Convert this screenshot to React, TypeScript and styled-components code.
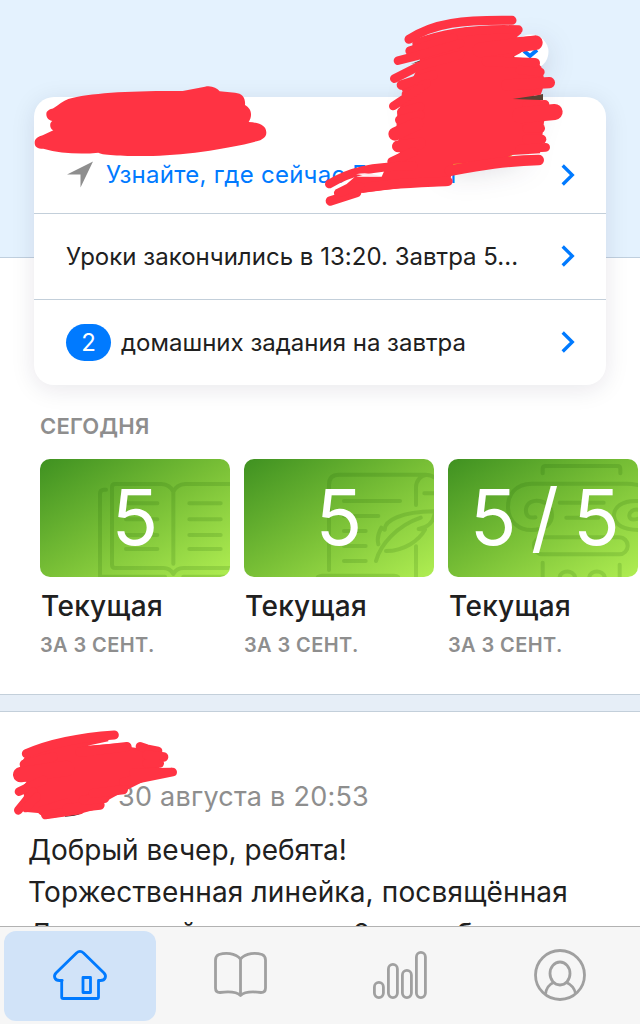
import React from "react";
import styled, { createGlobalStyle } from "styled-components";

const Global = createGlobalStyle`
  * { box-sizing: border-box; }
  body { margin: 0; background: #fff; font-family: Inter, "Liberation Sans", sans-serif; color: #202020; }
`;

const Screen = styled.main`
  position: relative;
  width: 640px;
  height: 1024px;
  display: flex;
  flex-direction: column;
  overflow: hidden;
  background: #fff;
`;

const Summary = styled.section`
  flex: none;
  height: 401px;
  padding: 97px 34px 0;
  background: linear-gradient(#e4f2fe 0 257px, #bfcfde 257px 258px, #fff 258px);
`;

const Card = styled.div`
  height: 288px;
  border-radius: 20px;
  background: #fff;
  box-shadow: 0 4px 24px rgba(30, 20, 60, 0.1);
  display: flex;
  flex-direction: column;
`;

const CardRow = styled.div<{ $h: number; $top?: number }>`
  height: ${(p) => p.$h}px;
  padding: ${(p) => p.$top ?? 0}px 31px 0 32px;
  display: flex;
  align-items: center;
  & + & { border-top: 1px solid #c3cfda; }
`;

const RowText = styled.span<{ $link?: boolean; $spacing: number }>`
  flex: 1;
  font-size: 24px;
  line-height: 30px;
  letter-spacing: ${(p) => p.$spacing}px;
  white-space: pre;
  color: ${(p) => (p.$link ? "#007aff" : "#202020")};
`;

const NameEnd = styled.span`
  margin-left: 75px;
`;

const Count = styled.span`
  width: 45px;
  height: 37px;
  margin-right: 10px;
  border-radius: 19px;
  background: #007aff;
  color: #fff;
  font-size: 24px;
  line-height: 37px;
  text-align: center;
`;

const LocationIcon = styled.svg`
  width: 27px;
  height: 27px;
  margin-right: 13px;
`;

const ChevronIcon = styled.svg<{ $lift: number }>`
  width: 14px;
  height: 22px;
  margin-bottom: ${(p) => p.$lift}px;
`;

const Today = styled.section`
  flex: none;
  height: 293px;
  padding: 10px 0 0 40px;
`;

const SectionTitle = styled.h2`
  margin: 0 0 18px;
  font-size: 22px;
  line-height: 30px;
  font-weight: 600;
  letter-spacing: 0.2px;
  color: #8e8e8e;
`;

const Marks = styled.div`
  display: flex;
  gap: 14px;
`;

const Mark = styled.article`
  flex: none;
  width: 190px;
`;

const MarkTile = styled.div`
  display: grid;
  height: 118px;
  border-radius: 10px;
  overflow: hidden;
  background: linear-gradient(to bottom right, #3f9121, #78bf36 50%, #b0ee52);
  & > * { grid-area: 1 / 1; }
`;

const MarkArt = styled.svg`
  width: 190px;
  height: 118px;
  fill: none;
  stroke: rgba(20, 90, 0, 0.15);
  stroke-width: 12;
  stroke-linecap: round;
  stroke-linejoin: round;
`;

const MarkValue = styled.div<{ $spacing: number }>`
  text-align: center;
  font-size: 77px;
  line-height: 117px;
  font-weight: 400;
  letter-spacing: ${(p) => p.$spacing}px;
  color: #fff;
  white-space: nowrap;
`;

const MarkName = styled.div`
  margin-top: 10px;
  padding-left: 1px;
  font-size: 28px;
  line-height: 38px;
  font-weight: 500;
  letter-spacing: 0.3px;
`;

const MarkDate = styled.div`
  margin-top: 6px;
  font-size: 20px;
  line-height: 28px;
  font-weight: 600;
  letter-spacing: 0.4px;
  color: #8e8e8e;
`;

const Divider = styled.div`
  flex: none;
  height: 18px;
  background: #e6eef7;
  border: solid #c3cfda;
  border-width: 1px 0;
`;

const Post = styled.article`
  flex: 1;
  min-height: 0;
  overflow: hidden;
  padding: 66px 0 0 28px;
`;

const PostDate = styled.div`
  padding-left: 90px;
  font-size: 27px;
  line-height: 38px;
  letter-spacing: 0.25px;
  color: #8e8e8e;
`;

const PostText = styled.p`
  margin: 13px 0 0;
  font-size: 28px;
  line-height: 42px;
  white-space: pre;
`;

const Line = styled.span<{ $spacing: number; $indent?: number }>`
  display: block;
  padding-left: ${(p) => p.$indent ?? 0}px;
  letter-spacing: ${(p) => p.$spacing}px;
`;

const TabBar = styled.nav`
  flex: none;
  height: 98px;
  padding: 4px 4px 3px;
  display: flex;
  gap: 8px;
  background: #f6f6f6;
  border-top: 1px solid #b2b2b2;
`;

const Tab = styled.button<{ $active?: boolean }>`
  width: 152px;
  height: 90px;
  padding: 0;
  border: 0;
  border-radius: 12px;
  background: ${(p) => (p.$active ? "#d1e3f8" : "transparent")};
  color: ${(p) => (p.$active ? "#007aff" : "#a0a0a0")};
`;

const TabIcon = styled.svg`
  display: block;
  width: 152px;
  height: 90px;
  fill: none;
  stroke: currentColor;
  stroke-width: 2.8;
  stroke-linejoin: round;
`;

const Scribble = styled.svg<{ $x: number; $y: number }>`
  position: absolute;
  left: ${(p) => p.$x}px;
  top: ${(p) => p.$y}px;
  overflow: visible;
`;

const Portrait = styled.svg`
  position: absolute;
  left: 380px;
  top: 0;
  overflow: visible;
  filter: drop-shadow(0 8px 14px rgba(30, 20, 60, 0.14));
`;

const RED = "#ff3343";

const Marker = ({ strokes, core }: { strokes: [number, string][]; core: string }) => (
  <>
    <path d={core} fill={RED} />
    <g fill="none" stroke={RED} strokeLinecap="round" strokeLinejoin="round">
      {strokes.map(([width, d]) => (
        <path key={d} d={d} strokeWidth={width} />
      ))}
    </g>
  </>
);

const Chevron = ({ lift = 0 }: { lift?: number }) => (
  <ChevronIcon viewBox="0 0 14 22" $lift={lift}>
    <path d="M1.700 1.500 11.300 11 1.700 20.500" fill="none" stroke="#007aff" strokeWidth="3.300" />
  </ChevronIcon>
);

const BookArt = () => (
  <MarkArt viewBox="0 0 570 354">
    <path d="M198 92H192Q180 92 180 104V353H375M430 353H575" />
    <path d="M400 98C395 85 380 75 365 75H226Q216 75 216 85V317Q216 327 226 327H370C385 327 394 334 400 345C406 334 415 327 430 327H580M400 98C405 85 420 75 435 75H580M400 98V314" />
    <path d="M258 133H352M258 181H352M258 228H352M258 270H352M448 133H542M448 181H542M448 228H542M448 270H542" />
  </MarkArt>
);

const FeatherArt = () => (
  <MarkArt viewBox="0 0 570 354">
    <path d="M255 333V77Q255 47 285 47H545Q565 47 580 62M516 138V85C516 65 530 50 545 48M541 103H580M516 262V360M222 354Q228 350 235 350H450Q458 350 462 354" />
    <path d="M300 126H468M300 171H403M300 216H365M300 261H365M300 306H365" />
    <path d="M396 306C410 255 460 200 530 176M403 256C399 240 404 220 412 206L422 212C422 185 470 157 580 157M426 276C480 276 525 245 543 212L524 210C550 205 568 190 572 165" />
  </MarkArt>
);

const ColumnArt = () => (
  <MarkArt viewBox="0 0 570 354">
    <path d="M284 43V30Q284 21 293 21H508Q517 21 517 30V43" />
    <path d="M580 80Q555 74 535 74H252C200 74 180 110 180 143C180 190 215 213 250 213C290 213 312 195 312 168C312 120 240 110 234 150C232 172 245 178 262 175" />
    <path d="M580 127C520 120 496 148 498 172C502 200 530 213 575 213M580 155C555 145 540 162 545 175C550 185 560 182 575 178" />
    <path d="M335 131H467M355 176H451" />
    <rect x="258" y="235" width="281" height="51" rx="25" />
    <path d="M284 311V360M515 317V360M335 354C339 332 376 332 381 354M424 354C428 332 465 332 470 354" />
  </MarkArt>
);

const marks = [
  { value: "5", spacing: 0, Art: BookArt },
  { value: "5", spacing: 0, Art: FeatherArt },
  { value: "5 / 5", spacing: -3.6, Art: ColumnArt },
];

export default function App() {
  return (
    <>
      <Global />
      <Screen>
        <Summary>
          <Card>
            <CardRow $h={116} $top={39}>
              <LocationIcon viewBox="0 0 27 27">
                <path d="M27 .5 14.500 26.500V13.500H1Z" fill="#8e8e8e" />
              </LocationIcon>
              <RowText $link $spacing={0.25}>
                Узнайте, где сейчас Е<NameEnd>и</NameEnd>
              </RowText>
              <Chevron />
            </CardRow>
            <CardRow $h={86}>
              <RowText $spacing={0.02}>Уроки закончились в 13:20. Завтра 5...</RowText>
              <Chevron lift={2} />
            </CardRow>
            <CardRow $h={86}>
              <Count>2</Count>
              <RowText $spacing={0}>домашних задания на завтра</RowText>
              <Chevron lift={2} />
            </CardRow>
          </Card>
        </Summary>

        <Today>
          <SectionTitle>СЕГОДНЯ</SectionTitle>
          <Marks>
            {marks.map(({ value, spacing, Art }, i) => (
              <Mark key={i}>
                <MarkTile>
                  <Art />
                  <MarkValue $spacing={spacing}>{value}</MarkValue>
                </MarkTile>
                <MarkName>Текущая</MarkName>
                <MarkDate>ЗА 3 СЕНТ.</MarkDate>
              </Mark>
            ))}
          </Marks>
        </Today>

        <Divider />

        <Post>
          <PostDate>30 августа в 20:53</PostDate>
          <PostText>
            <Line $spacing={0}>Добрый вечер, ребята!</Line>
            <Line $spacing={0.15}>Торжественная линейка, посвящённая</Line>
            <Line $spacing={0.13} $indent={1}>Дню знаний состоится 2 сентября</Line>
          </PostText>
        </Post>

        <TabBar>
          <Tab $active aria-label="Главная">
            <TabIcon viewBox="4 931 152 90">
              <path d="M62.2 980.5H59.5C54.5 980.5 53.2 976 56 973L76.5 953Q80 949.8 83.500 953L104 973C106.800 976 105.500 980.5 100.500 980.5H98.500V997Q98.500 998.500 97 998.500H63.200Q61.700 998.500 61.700 997V980.5Z" />
              <rect x="83" y="977.500" width="7.500" height="15" />
            </TabIcon>
          </Tab>
          <Tab aria-label="Дневник">
            <TabIcon viewBox="164 931 152 90">
              <path d="M240.500 959C235 952.500 225 952.500 219 954.500Q215.500 956 215.500 960V988Q215.500 992.500 220 992.500C228 991.500 236 991 240.500 995.500C245 991 253 991.500 261 992.500Q265.500 992.500 265.500 988V960Q265.500 956 262 954.500C256 952.500 246 952.500 240.500 959V995" />
            </TabIcon>
          </Tab>
          <Tab aria-label="Оценки">
            <TabIcon viewBox="324 931 152 90">
              <rect x="374.400" y="982.400" width="9" height="15.200" rx="4.500" />
              <rect x="388.400" y="964.400" width="9" height="33.200" rx="4.500" />
              <rect x="402.400" y="970.400" width="9" height="27.200" rx="4.500" />
              <rect x="416.400" y="952.400" width="9" height="45.200" rx="4.500" />
            </TabIcon>
          </Tab>
          <Tab aria-label="Профиль">
            <TabIcon viewBox="484 931 152 90">
              <circle cx="560" cy="975" r="24.500" />
              <ellipse cx="560" cy="973.500" rx="10" ry="11.500" />
              <path d="M545.500 994.500C546 988 549 984.500 553.500 982.500M566.500 982.500C571 984.500 574.500 988 575.500 993.500" />
            </TabIcon>
          </Tab>
        </TabBar>

        <Portrait width="200" height="200" viewBox="380 0 200 200">
          <circle cx="474" cy="100" r="60" fill="#5a4234" />
          <path d="M411 64 436 54 420 62ZM522 98 543 94V100H522Z" fill="#5a4234" />
          <path d="M448 150V166Q480 166 513 158V140Z" fill="#e5b52f" />
          <path d="M510 157 530 158 525 145Z" fill="#eeeeee" />
          <circle cx="531" cy="52" r="17.500" fill="#fff" />
          <path d="M524 51 530 56 537 50" fill="none" stroke="#007aff" strokeWidth="4" />
        </Portrait>

        <Scribble $x={0} $y={0} width="320" height="220" viewBox="0 0 960 660">
          <path fill={RED} d="M160 325C175 315 190 302 205 297C270 278 400 272 548 273L615 260C635 256 650 264 659 274L705 278C728 280 737 295 735 315C758 328 756 350 746 366C780 368 799 378 799 398C799 412 785 420 770 424C680 448 540 468 440 468C380 468 310 467 295 458C240 464 180 460 130 446C112 446 104 440 104 428C104 415 116 410 128 406L160 391C148 385 148 368 157 363C142 360 139 350 139 342C139 332 150 328 160 325Z" />
        </Scribble>

        <Scribble $x={320} $y={0} width="320" height="220" viewBox="0 0 960 660">
          <Marker
            core="M290 118 360 98 440 82 590 86 604 100 590 112 640 108 640 130 600 160 578 172 640 176 664 200 672 235 668 268 662 284 578 297 660 300 690 320 672 366 668 400 660 460 576 465 540 481 400 492 390 545 130 578 60 582 44 570 80 552 105 530 185 530 205 485 215 475 240 458 222 440 236 420 228 400 232 340 248 300 252 280 240 262 280 230 300 190 300 170 262 165 275 140Z"
            strokes={[
              [27, "M267 118C340 68 430 59 576 61"],
              [26, "M290 130C380 95 480 85 595 89"],
              [44, "M480 150 646 128"],
              [28, "M270 153 400 115"],
              [26, "M234 182 300 165 420 130"],
              [26, "M223 236 300 197 420 165"],
              [28, "M244 255 340 225"],
              [26, "M258 282 320 250"],
              [26, "M220 318 300 265"],
              [28, "M245 336 300 320"],
              [28, "M239 360 300 345"],
              [40, "M225 402 290 372"],
              [36, "M234 439 300 430"],
              [28, "M216 485 280 455"],
              [30, "M500 184 645 189"],
              [26, "M600 210 661 216"],
              [34, "M560 255 688 248"],
              [26, "M620 315 675 313"],
              [48, "M600 346 704 336"],
              [26, "M620 385 662 385"],
              [28, "M620 418 665 418"],
              [26, "M600 447 677 442"],
              [32, "M656 480C560 482 480 496 390 512"],
              [26, "M28 552C90 515 150 500 280 497"],
              [28, "M384 544C300 548 200 550 130 564"],
              [28, "M31 603 110 578"],
              [24, "M54 580 120 558"],
            ]}
          />
          <path d="M108 523Q140 514 180 528L150 529Z" fill="#ffe9ec" />
        </Scribble>

        <Scribble $x={0} $y={680} width="320" height="250" viewBox="0 0 960 750">
          <path fill="#202020" d="M195 403 245 400Q225 410 195 410Z" />
          <Marker
            core="M79 225 240 180 325 170 325 184 262 197 381 188 395 202 470 212 485 255 440 300 370 335 310 368 300 385 240 401 137 416 122 400 80 396 68 385 72 345 62 325 80 305 55 300 62 250Z"
            strokes={[
              [27, "M343 165C240 172 150 190 79 221"],
              [28, "M381 200 240 216"],
              [26, "M420 199 440 206 474 213"],
              [28, "M440 225 491 231"],
              [26, "M440 250 479 250"],
              [26, "M400 278 518 276 370 306"],
              [28, "M73 253 160 230"],
              [46, "M62 284 200 265"],
              [26, "M57 335 130 300"],
              [26, "M55 391 100 335"],
              [26, "M78 384 110 350"],
              [28, "M127 392 200 370"],
              [26, "M136 405 240 390"],
              [28, "M300 375 200 386"],
              [28, "M314 355 250 360"],
              [28, "M370 329 280 340"],
            ]}
          />
        </Scribble>
      </Screen>
    </>
  );
}
